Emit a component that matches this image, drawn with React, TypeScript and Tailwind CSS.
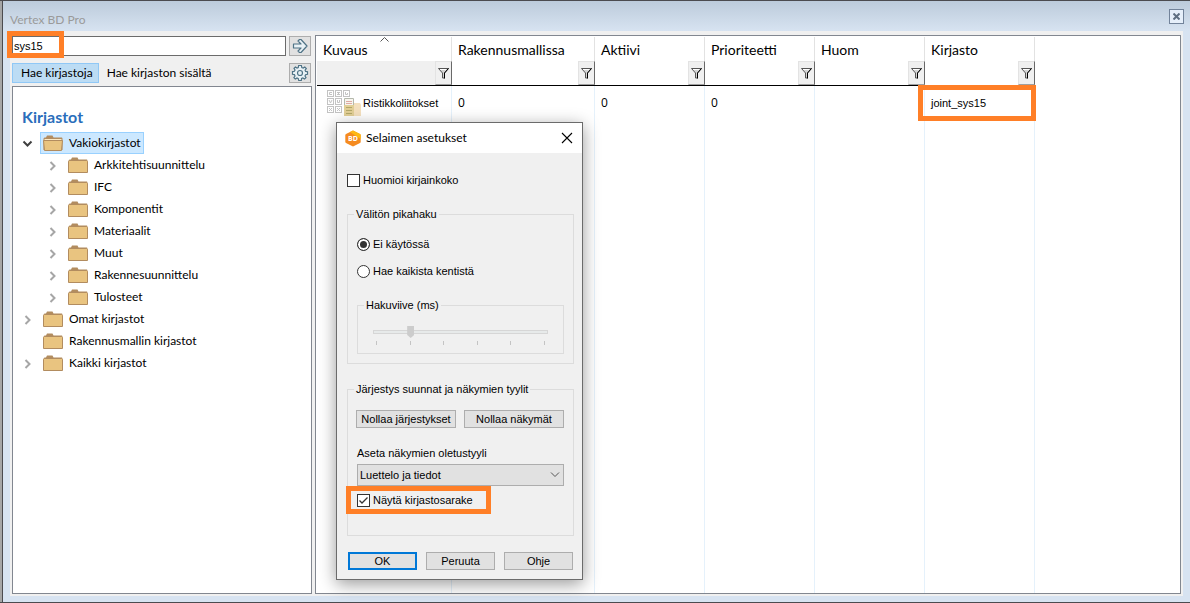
import type { ReactNode } from "react";

interface TreeItem {
  label: string;
  level: number;
  state: "open" | "closed" | "leaf";
}

const tree: TreeItem[] = [
  { label: "Vakiokirjastot", level: 0, state: "open" },
  { label: "Arkkitehtisuunnittelu", level: 1, state: "closed" },
  { label: "IFC", level: 1, state: "closed" },
  { label: "Komponentit", level: 1, state: "closed" },
  { label: "Materiaalit", level: 1, state: "closed" },
  { label: "Muut", level: 1, state: "closed" },
  { label: "Rakennesuunnittelu", level: 1, state: "closed" },
  { label: "Tulosteet", level: 1, state: "closed" },
  { label: "Omat kirjastot", level: 0, state: "closed" },
  { label: "Rakennusmallin kirjastot", level: 0, state: "leaf" },
  { label: "Kaikki kirjastot", level: 0, state: "closed" },
];

const columns = [
  { label: "Kuvaus", width: "w-[135px]", sorted: true },
  { label: "Rakennusmallissa", width: "w-[143px]", sorted: false },
  { label: "Aktiivi", width: "w-[110px]", sorted: false },
  { label: "Prioriteetti", width: "w-[110px]", sorted: false },
  { label: "Huom", width: "w-[110px]", sorted: false },
  { label: "Kirjasto", width: "w-[110px]", sorted: false },
];

// Orange marker frame drawn on top of its positioned parent
function Marker({ className }: { className: string }) {
  return <span className={`pointer-events-none absolute z-10 border-[5px] border-[#ff7f27] ${className}`} />;
}

function FolderIcon({ open }: { open: boolean }) {
  return (
    <svg width="20" height="16" viewBox="0 0 20 16" className="shrink-0">
      <path d="M0.5 15V3.5L1.5 2.5H3L4 0.5H9.5L10.5 2.5H19L19.5 3.5V15Z" fill="#b28c5f" />
      {open ? (
        <>
          <path d="M1.5 5V4H18.5V5Z" fill="#fbe9c5" />
          <path d="M0.5 5.5H19.5L18.5 15.5H1.5Z" fill="#e9c480" stroke="#b28c5f" />
        </>
      ) : (
        <path d="M0.5 4.5L1.5 3.5H18.5L19.5 4.5V15.5H0.5Z" fill="#e9c480" stroke="#b28c5f" />
      )}
    </svg>
  );
}

function TreeChevron({ state }: { state: TreeItem["state"] }) {
  return (
    <svg width="12" height="12" viewBox="0 0 12 12" fill="none" strokeWidth="2" className="shrink-0">
      {state === "open" && <path d="M1.5 4.5L5.5 8.5L9.5 4.5" stroke="#404040" />}
      {state === "closed" && <path d="M3.5 3L7.5 7L3.5 11" stroke="#a6a6a6" />}
    </svg>
  );
}

function FilterIcon() {
  return (
    <svg width="11" height="12" viewBox="0 0 11 12">
      <path d="M0.5 1.5H10.5L6.5 6V11H4.5V6Z" fill="#d4d4d4" stroke="#555" />
      <path d="M10.5 1.5L6.5 6V11.5" fill="none" stroke="#000" />
      <path d="M2 2.5H8" stroke="#fff" />
    </svg>
  );
}

function LibraryIcon() {
  // grid of small symbol tiles: position and the mark inside
  const cells = [
    { x: 0, y: 0, mark: "M5 2.5H2.5V4.5H5" },
    { x: 8, y: 0, mark: "M2 2.5H5M3.5 2.5V4.5M2 4.5H5" },
    { x: 16, y: 0, mark: "M2.5 2V4.5H4.5V3" },
    { x: 0, y: 8, mark: "M2 2L3.5 5L5 2" },
    { x: 8, y: 8, mark: "M2.5 2V4.5H4.5V2" },
    { x: 0, y: 16, mark: "M2 2L5 5M5 2L2 5" },
    { x: 8, y: 16, mark: "M2 2L5 5M5 2L2 5" },
  ];
  return (
    <svg width="34" height="27" viewBox="0 0 34 27" className="shrink-0">
      {cells.map(({ x, y, mark }) => (
        <g key={`${x}-${y}`} fill="none" stroke="#c3c3c3" transform={`translate(${x} ${y})`}>
          <rect x="0.5" y="0.5" width="6" height="6" />
          <path d={mark} />
        </g>
      ))}
      <path d="M17 26V15H26L27 13H33L34 15V26Z" fill="#f4e0be" />
      <path d="M17.5 8.5H26.5V25.5H17.5Z" fill="#f7f5ee" stroke="#b4b8ac" />
      <path d="M17 15H27V26H17Z" fill="#e2cf96" />
      <path d="M19 11.5H25M19 13.5H25" stroke="#e0aaa2" />
      <path d="M19 17.5H25M19 20.5H25M19 23.5H25" stroke="#b3a869" />
    </svg>
  );
}

function BdIcon() {
  return (
    <svg width="16" height="17" viewBox="0 0 16 17" className="shrink-0">
      <path d="M8 0.5L15 4Q15.7 4.4 15.7 5V12Q15.7 12.6 15 13L8 16.5L1 13Q0.3 12.6 0.3 12V5Q0.3 4.4 1 4Z" fill="#f58b20" />
      <path d="M8 0.5L15 4Q15.7 4.4 15.7 5V9L5 2Z" fill="#fdb913" />
      <text x="8" y="11" textAnchor="middle" fontSize="7" fontWeight="700" fill="#fff" fontFamily="Open Sans, sans-serif">
        BD
      </text>
    </svg>
  );
}

function GroupBox({ title, className, children }: { title: string; className: string; children: ReactNode }) {
  return (
    <fieldset className="border border-[#dcdcdc]">
      <legend className="ml-1.5 px-0.5 leading-4">{title}</legend>
      <div className={className}>{children}</div>
    </fieldset>
  );
}

function Check({ label, checked = false }: { label: string; checked?: boolean }) {
  return (
    <label className="flex items-center gap-[3px] leading-[14px]">
      <span className="grid">
        <input
          type="checkbox"
          defaultChecked={checked}
          className="peer col-start-1 row-start-1 size-[13px] appearance-none border border-[#333] bg-white"
        />
        <svg
          width="13"
          height="13"
          viewBox="0 0 13 13"
          fill="none"
          className="pointer-events-none invisible col-start-1 row-start-1 peer-checked:visible"
        >
          <path d="M2.5 6.5L5 9L10.5 3.5" stroke="#333" strokeWidth="1.3" />
        </svg>
      </span>
      {label}
    </label>
  );
}

function Radio({ label, checked = false }: { label: string; checked?: boolean }) {
  return (
    <label className="flex items-center gap-[3px] leading-[14px]">
      <input
        type="radio"
        name="quicksearch"
        defaultChecked={checked}
        className="size-[13px] appearance-none rounded-full border border-[#333] bg-white checked:bg-[#333] checked:shadow-[inset_0_0_0_2px_#fff]"
      />
      {label}
    </label>
  );
}

function PushButton({ children, primary = false, className }: { children: string; primary?: boolean; className: string }) {
  return (
    <button
      className={`flex h-[18px] items-center justify-center bg-[#e1e1e1] whitespace-nowrap ${primary ? "border-2 border-[#0078d7]" : "border border-[#adadad]"} ${className}`}
    >
      {children}
    </button>
  );
}

function SettingsDialog() {
  return (
    <div
      role="dialog"
      aria-label="Selaimen asetukset"
      className="absolute top-[121px] left-[336px] z-20 w-[247px] border border-[#6b6b6b] bg-[#f0f0f0] font-['Liberation_Sans',sans-serif] text-[11px] text-black shadow-[0_4px_16px_rgba(0,0,0,0.4)]"
    >
      <header className="flex h-[30px] items-center gap-[5px] bg-white pr-[9px] pl-2 font-['Lato',sans-serif] text-[12px]">
        <BdIcon />
        <h2 className="grow">Selaimen asetukset</h2>
        <button aria-label="Sulje">
          <svg width="12" height="12" viewBox="0 0 12 12" stroke="#000" strokeWidth="1.1">
            <path d="M1 1L11 11M11 1L1 11" />
          </svg>
        </button>
      </header>
      <div className="pt-5 pr-2 pb-[9px] pl-2.5">
        <Check label="Huomioi kirjainkoko" />
        <div className="mt-[19px] space-y-[17px]">
          <GroupBox title="Välitön pikahaku" className="px-[9px] pb-[9px]">
            <div className="mt-[15px] mb-[19px] space-y-[13px]">
              <Radio label="Ei käytössä" checked />
              <Radio label="Hae kaikista kentistä" />
            </div>
            <GroupBox title="Hakuviive (ms)" className="px-[15px] pb-2">
              <input
                type="range"
                min={0}
                max={5}
                defaultValue={1}
                aria-label="Hakuviive (ms)"
                disabled
                className="mt-[13px] block h-3 w-full appearance-none bg-transparent [&::-webkit-slider-runnable-track]:h-1 [&::-webkit-slider-runnable-track]:border [&::-webkit-slider-runnable-track]:border-[#d6d6d6] [&::-webkit-slider-runnable-track]:bg-[#e7eaea] [&::-webkit-slider-thumb]:-mt-[5px] [&::-webkit-slider-thumb]:h-3 [&::-webkit-slider-thumb]:w-[7px] [&::-webkit-slider-thumb]:appearance-none [&::-webkit-slider-thumb]:bg-[#ccc] [&::-webkit-slider-thumb]:[clip-path:polygon(0_0,100%_0,100%_75%,50%_100%,0_75%)]"
              />
              <div className="mt-[3px] flex h-1 justify-between px-[3px]">
                {[0, 1, 2, 3, 4, 5].map((tick) => (
                  <span key={tick} className="w-px bg-[#c4c4c4]" />
                ))}
              </div>
            </GroupBox>
          </GroupBox>
          <GroupBox title="Järjestys suunnat ja näkymien tyylit" className="px-[9px] pb-[28px]">
            <div className="mt-[13px] -ml-px flex gap-2">
              <PushButton className="w-[100px]">Nollaa järjestykset</PushButton>
              <PushButton className="grow">Nollaa näkymät</PushButton>
            </div>
            <label htmlFor="viewstyle" className="mt-[17px] block leading-4">
              Aseta näkymien oletustyyli
            </label>
            <div className="mt-[3px] grid items-center">
              <select
                id="viewstyle"
                className="col-start-1 row-start-1 h-[22px] appearance-none border border-[#adadad] bg-[#e1e1e1] px-0.5"
              >
                <option>Luettelo ja tiedot</option>
              </select>
              <svg
                width="10"
                height="6"
                viewBox="0 0 10 6"
                fill="none"
                stroke="#555"
                className="pointer-events-none col-start-1 row-start-1 mr-1 justify-self-end"
              >
                <path d="M1 0.5L5 4.5L9 0.5" />
              </svg>
            </div>
            <div className="relative mt-[7px]">
              <Check label="Näytä kirjastosarake" checked />
              <Marker className="-top-[7px] -left-[11px] h-7 w-[145px]" />
            </div>
          </GroupBox>
        </div>
        <div className="mt-4 flex gap-[9px] pl-px">
          <PushButton primary className="w-[69px]">OK</PushButton>
          <PushButton className="w-[69px]">Peruuta</PushButton>
          <PushButton className="w-[69px]">Ohje</PushButton>
        </div>
      </div>
    </div>
  );
}

function Sidebar() {
  return (
    <aside className="flex w-[300px] shrink-0 flex-col">
      <form className="relative flex h-5 gap-[3px] pr-px">
        <input
          type="text"
          aria-label="Haku"
          defaultValue="sys15"
          className="min-w-0 grow border border-[#6b6b6b] bg-white px-px font-['Liberation_Sans',sans-serif] text-[11px]"
        />
        <button
          type="button"
          aria-label="Hae"
          className="flex w-[22px] shrink-0 items-center justify-center border border-[#adadad] bg-[#e1e1e1]"
        >
          <svg width="16" height="16" viewBox="0 0 16 16" fill="#e8f1f5" stroke="#4f7386" strokeWidth="1.2">
            <path d="M1.5 6H9L6 3L7.5 1.5H9L15 8L9 14.5H7.5L6 13L9 10H1.5Z" strokeLinejoin="round" />
          </svg>
        </button>
        <Marker className="-top-[5px] -left-[5px] h-[27px] w-[57px]" />
      </form>
      <div className="mt-[7px] mb-[3px] flex h-5 items-center pr-px">
        <button className="h-5 border border-[#90c8f6] bg-[#bcdcf4] pr-[5px] pl-2">Hae kirjastoja</button>
        <button className="px-2">Hae kirjaston sisältä</button>
        <button
          aria-label="Asetukset"
          className="ml-auto flex h-5 w-[22px] items-center justify-center border border-[#adadad] bg-[#e1e1e1]"
        >
          <svg width="18" height="18" viewBox="0 0 18 18" fill="#e8f1f5" stroke="#4f7386" strokeWidth="1.2">
            <path d="M7.6 1.5H10.4L10.8 3.5L12.2 4.1L13.8 3L15.3 4.5L14.1 6.1L14.6 7.4L16.5 7.7V10.3L14.6 10.7L14 12L15 13.7L13.5 15L11.9 14L10.6 14.5L10.3 16.5H7.7L7.3 14.6L6 14L4.3 15.1L2.9 13.7L4 12L3.4 10.6L1.5 10.3V7.6L3.4 7.3L4 6L3 4.4L4.4 3L6 4.1L7.3 3.5Z" />
            <circle cx="9" cy="9" r="2.5" />
          </svg>
        </button>
      </div>
      <nav className="grow border border-[#828790] bg-white pt-[19px] pl-[9px]">
        <h1 className="mb-1 text-[16px] leading-[22px] font-bold text-[#2a6ebb]">Kirjastot</h1>
        <ul>
          {tree.map((item) => (
            <li key={item.label} className={`flex h-[22px] items-center gap-1.5 ${item.level === 1 ? "pl-[25px]" : ""}`}>
              <TreeChevron state={item.state} />
              <a
                href="#"
                className={`flex h-[22px] items-center gap-1.5 border px-0.5 ${item.state === "open" ? "border-[#99d1ff] bg-[#cce8ff]" : "border-transparent"}`}
              >
                <FolderIcon open={item.state === "open"} />
                {item.label}
              </a>
            </li>
          ))}
        </ul>
      </nav>
    </aside>
  );
}

function ResultTable() {
  return (
    <main className="flex grow border border-[#828790] bg-white p-px pb-0">
      <table className="h-full w-full table-fixed border-separate border-spacing-0 text-left">
        <thead>
          <tr className="h-6 text-[14px]">
            {columns.map((col) => (
              <th key={col.label} className={`relative border-r border-[#e2e2e2] px-1.5 font-normal ${col.width}`}>
                {col.label}
                {col.sorted && (
                  <svg
                    width="9"
                    height="5"
                    viewBox="0 0 9 5"
                    fill="none"
                    stroke="#555"
                    className="absolute top-0 left-[63px]"
                  >
                    <path d="M0.5 4.5L4.5 0.5L8.5 4.5" />
                  </svg>
                )}
              </th>
            ))}
            <td />
          </tr>
          <tr className="h-[25px]">
            {columns.map((col) => (
              <td key={col.label} className="border-b border-black p-0">
                <div className="flex h-6">
                  <input
                    type="text"
                    aria-label={`Suodata ${col.label}`}
                    disabled={col.sorted}
                    className="min-w-0 grow bg-white disabled:bg-[#f0f0f0]"
                  />
                  <button
                    aria-label={`Suodatin ${col.label}`}
                    className="flex w-[17px] shrink-0 items-center justify-center border border-t-[#e3e3e3] border-r-[#696969] border-b-[#a0a0a0] border-l-[#e3e3e3] bg-[#f0f0f0]"
                  >
                    <FilterIcon />
                  </button>
                </div>
              </td>
            ))}
            <td />
          </tr>
        </thead>
        <tbody>
          <tr className="h-[34px] font-['Open_Sans',sans-serif]">
            <td className="border-r border-[#e5f1fb] p-0 pl-[10px]">
              <div className="flex items-center gap-0.5 font-['Liberation_Sans',sans-serif] text-[11px]">
                <LibraryIcon />
                Ristikkoliitokset
              </div>
            </td>
            <td className="border-r border-[#e5f1fb] px-1.5">0</td>
            <td className="border-r border-[#e5f1fb] px-1.5">0</td>
            <td className="border-r border-[#e5f1fb] px-1.5">0</td>
            <td className="border-r border-[#e5f1fb]" />
            <td className="relative border-r border-[#e5f1fb] px-1.5 font-['Liberation_Sans',sans-serif] text-[11px]">
              joint_sys15
              <Marker className="-top-px -right-0.5 -bottom-px -left-[7px]" />
            </td>
            <td />
          </tr>
          {/* filler row keeps the column rules running to the bottom */}
          <tr>
            {columns.map((col) => (
              <td key={col.label} className="border-r border-[#e5f1fb]" />
            ))}
            <td />
          </tr>
        </tbody>
      </table>
    </main>
  );
}

export default function App() {
  return (
    <div className="relative flex h-screen flex-col border-y border-[#4b4b4f] bg-[#a6a6a6] pl-0.5 font-['Lato',sans-serif] text-[12px] text-black">
      <div className="flex grow flex-col border-l border-[#4b4b4f] bg-[#d7e3f1] pr-[7px] pb-[6px] pl-[7px]">
        <header className="-mx-[7px] flex h-[30px] shrink-0 items-center justify-between bg-linear-to-b from-[#bccbdb] to-[#d7e3f1] pr-1.5 pl-[7px] text-[#9a9a9a]">
          <span className="pt-2">Vertex BD Pro</span>
          <button
            aria-label="Sulje ikkuna"
            className="flex size-[15px] items-center justify-center border border-[#72839a] bg-[#e6effa]"
          >
            <svg width="7" height="7" viewBox="0 0 7 7" stroke="#5f6f82" strokeWidth="2">
              <path d="M0.5 0.5L6.5 6.5M6.5 0.5L0.5 6.5" />
            </svg>
          </button>
        </header>
        <div className="flex grow gap-[3px] bg-[#f0f0f0] px-0.5 pt-1 pb-0.5">
          <div className="flex pt-px">
            <Sidebar />
          </div>
          <ResultTable />
        </div>
      </div>
      <SettingsDialog />
    </div>
  );
}
